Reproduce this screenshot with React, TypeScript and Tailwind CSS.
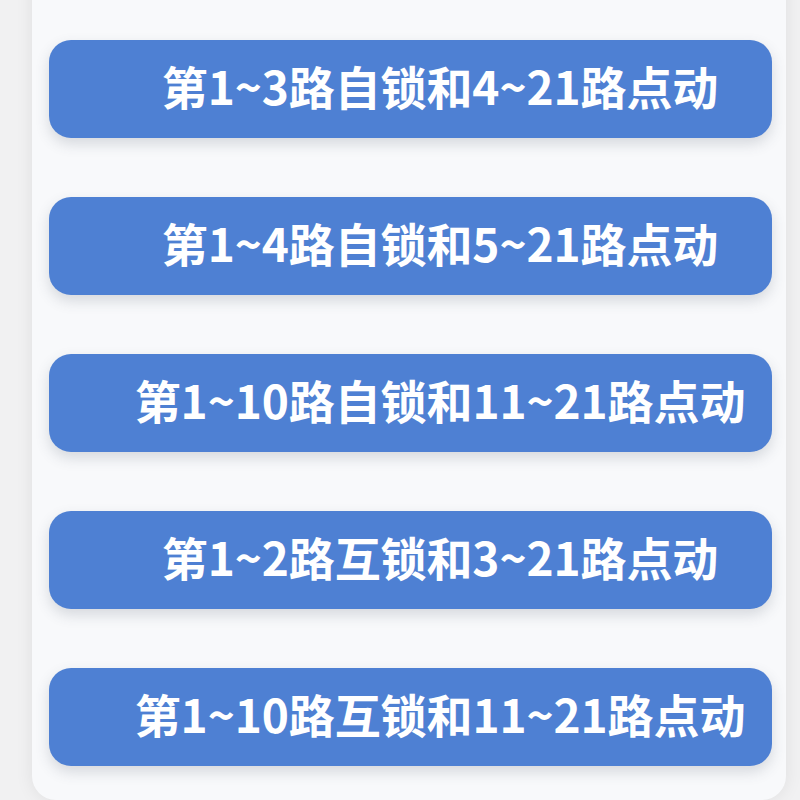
import React from "react";

const modes = [
  "第1~3路自锁和4~21路点动",
  "第1~4路自锁和5~21路点动",
  "第1~10路自锁和11~21路点动",
  "第1~2路互锁和3~21路点动",
  "第1~10路互锁和11~21路点动",
];

const ModeButton: React.FC<{ label: string }> = ({ label }) => (
  <button className="flex h-[98px] w-full items-center justify-center rounded-[22px] bg-[#4e80d3] pb-[8px] pl-[59px] text-[46px] font-bold tracking-[-0.1px] text-white shadow-[0_6px_14px_rgba(60,70,90,0.18)]">
    {label}
  </button>
);

const App: React.FC = () => {
  return (
    <div
      className="h-[800px] w-[800px] overflow-hidden bg-[#f1f1f2]"
      style={{ fontFamily: '"Noto Sans CJK SC", "Noto Sans", sans-serif' }}
    >
      <div className="-mt-[40px] ml-[32px] mr-[14px] h-[840px] rounded-[24px] bg-[#f8f9fb] pl-[17px] pr-[14px] pt-[80px] shadow-[0_0_18px_rgba(0,0,0,0.08)]">
        <div className="flex flex-col gap-[59px]">
          {modes.map((m) => (
            <ModeButton key={m} label={m} />
          ))}
        </div>
      </div>
    </div>
  );
};

export default App;
